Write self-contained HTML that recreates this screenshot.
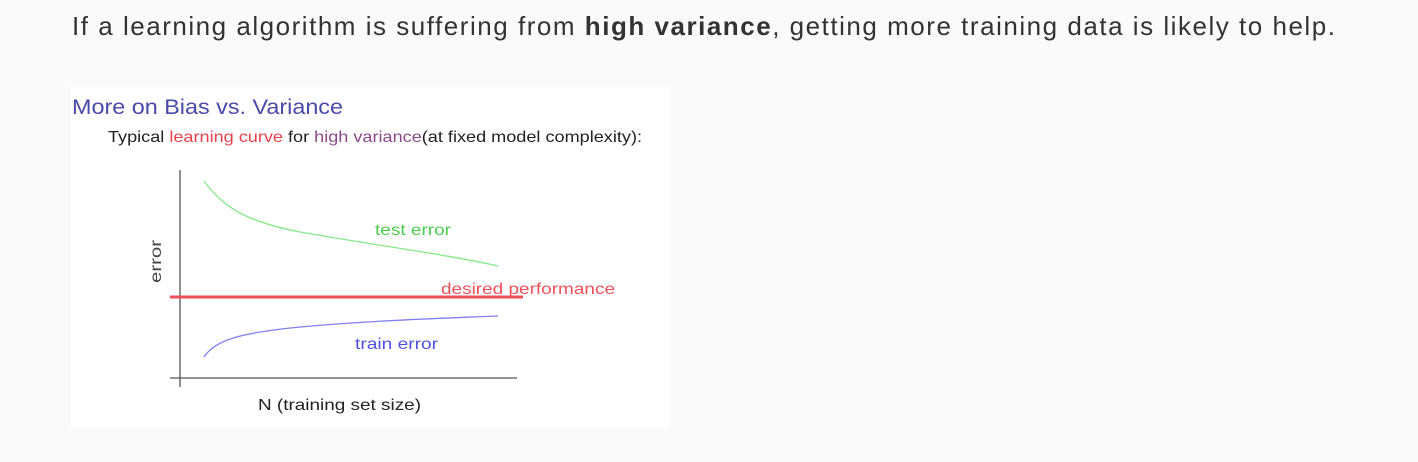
<!DOCTYPE html>
<html><head><style>
html,body{margin:0;padding:0;background:#fafafa;width:1418px;height:462px;overflow:hidden}
p{position:absolute;left:72px;top:7px;margin:0;font:26px/38px "Liberation Sans",sans-serif;color:#333;white-space:nowrap;letter-spacing:1.52px}
.img{position:absolute;left:71px;top:87px;width:600px;height:340px;background:#fff}
svg text{font-family:"Liberation Sans",sans-serif}
</style></head><body>
<p>If a learning algorithm is suffering from <b>high variance</b>, getting more training data is likely to help.</p>
<div class="img">
<svg width="600" height="340" viewBox="71 87 600 340">
<text x="72" y="114" font-size="21" fill="#4a4aa8" textLength="271" lengthAdjust="spacingAndGlyphs">More on Bias vs. Variance</text>
<text x="108" y="142" font-size="16" fill="#222" textLength="534" lengthAdjust="spacingAndGlyphs">Typical <tspan fill="#e8424a">learning curve</tspan> for <tspan fill="#8a4a8a">high variance</tspan>(at fixed model complexity):</text>
<line x1="180" y1="170" x2="180" y2="387" stroke="#555" stroke-width="1.3"/>
<line x1="170" y1="378" x2="517" y2="378" stroke="#555" stroke-width="1.3"/>
<line x1="170" y1="297" x2="523" y2="297" stroke="#f0505a" stroke-width="3"/>
<path d="M204 181 C225 210 250 222 300 232 C380 246 450 255 498 266" fill="none" stroke="#88e888" stroke-width="1.3"/>
<path d="M204 357 C215 340 240 333 300 327 C380 320 450 318 498 316" fill="none" stroke="#8080f0" stroke-width="1.3"/>
<text x="375" y="235" font-size="16" fill="#4ccc4c" textLength="76" lengthAdjust="spacingAndGlyphs">test error</text>
<text x="441" y="294" font-size="16" fill="#f0505a" textLength="174" lengthAdjust="spacingAndGlyphs">desired performance</text>
<text x="355" y="349" font-size="16" fill="#5050e0" textLength="83" lengthAdjust="spacingAndGlyphs">train error</text>
<text x="0" y="0" font-size="16" fill="#444" transform="translate(161,283) rotate(-90)" textLength="43" lengthAdjust="spacingAndGlyphs">error</text>
<text x="258" y="410" font-size="16" fill="#222" textLength="163" lengthAdjust="spacingAndGlyphs">N (training set size)</text>
</svg>
</div>
</body></html>
